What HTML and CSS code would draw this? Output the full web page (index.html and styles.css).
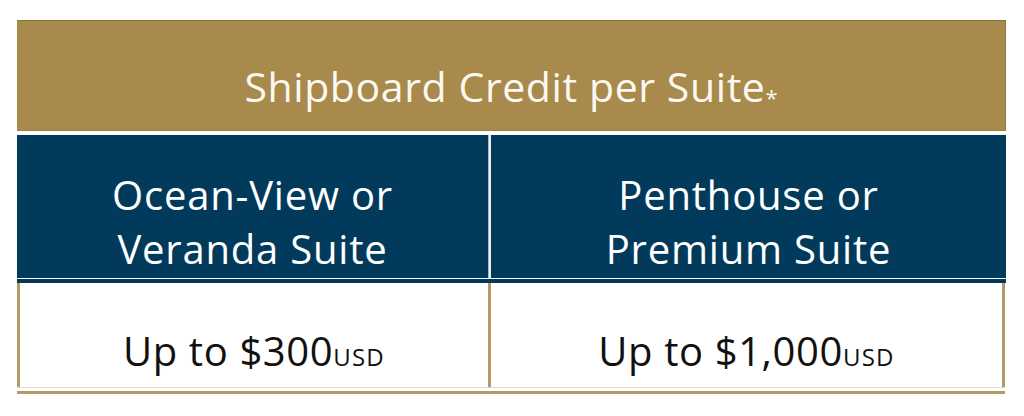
FILE: index.html
```html
<!DOCTYPE html>
<html lang="en">
<head>
<meta charset="utf-8">
<title>Shipboard Credit per Suite</title>
<link rel="stylesheet" href="styles.css">
</head>
<body>
<div class="credit-table">
  <div class="head">Shipboard Credit per Suite<span class="ast">*</span></div>
  <div class="navy-row">
    <div class="navy-cell left">Ocean-View or<br>Veranda Suite</div>
    <div class="navy-cell right">Penthouse or<br>Premium Suite</div>
  </div>
  <div class="navy-rule"></div>
  <div class="body-row">
    <div class="body-cell left">Up to $300<span class="usd">USD</span></div>
    <div class="body-cell right">Up to $1,000<span class="usd">USD</span></div>
  </div>
  <div class="foot-rule"></div>
</div>
</body>
</html>
```

FILE: styles.css
```css
html, body {
  margin: 0;
  padding: 0;
  background: #ffffff;
}

body {
  font-family: "Open Sans", "Noto Sans", sans-serif;
}

.credit-table {
  width: 989px;
  margin: 20px 0 0 17px;
}

.head {
  box-sizing: border-box;
  height: 111px;
  background: #a88a4c;
  border-top: 1px solid #86703f;
  border-right: 1px solid #8e7744;
  border-bottom: 1px solid #9a7f46;
  color: #fbf8f2;
  font-size: 41px;
  letter-spacing: 0.6px;
  text-align: center;
  padding-top: 42px;
  line-height: 46px;
}

.ast {
  font-size: 22px;
  letter-spacing: 0;
  vertical-align: -4px;
}

.navy-row {
  margin-top: 4px;
  display: grid;
  grid-template-columns: 471px 3px 1fr;
  height: 143px;
  background: #023a5c;
}

.navy-row::before {
  content: "";
  grid-column: 2;
  grid-row: 1;
  background: #e9eef2;
  border-left: 1px solid #a9bccb;
}

.navy-cell {
  grid-row: 1;
  color: #ffffff;
  font-size: 40px;
  letter-spacing: 0.8px;
  line-height: 54px;
  text-align: center;
  padding-top: 33px;
}

.navy-cell.left { grid-column: 1; }
.navy-cell.right { grid-column: 3; }

.navy-rule {
  height: 4px;
  margin-top: 1px;
  background: #023a5c;
}

.body-row {
  display: grid;
  grid-template-columns: 471px 1fr;
  height: 104px;
  width: 988px;
  box-sizing: border-box;
  border-left: 3px solid #b39a66;
  border-right: 3px solid #b39a66;
}

.body-cell {
  color: #111111;
  font-size: 40px;
  letter-spacing: 0.6px;
  text-align: center;
  padding-top: 41px;
  line-height: 54px;
}

.body-cell.left {
  border-right: 3px solid #b39a66;
  margin-left: -3px;
  padding-left: 3px;
}

.usd {
  font-size: 24px;
  letter-spacing: 1.2px;
}

.foot-rule {
  width: 988px;
  height: 3px;
  border-top: 1px solid #dadada;
  padding-top: 3px;
  background: #b39a66;
  background-clip: content-box;
}
```
